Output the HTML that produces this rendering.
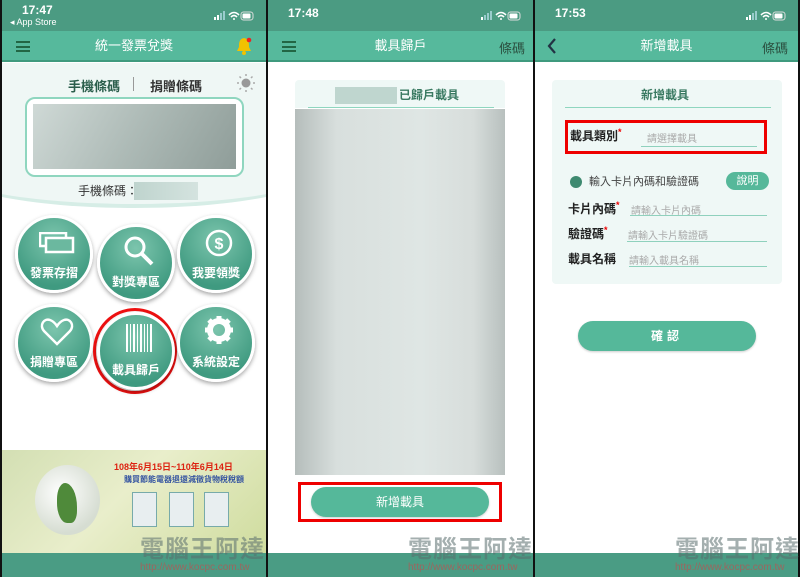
<!DOCTYPE html>
<html><head><meta charset="utf-8"><style>
*{margin:0;padding:0;box-sizing:border-box}
body{width:800px;height:577px;overflow:hidden;background:#111;font-family:"Liberation Sans","Noto Sans CJK TC",sans-serif;position:relative}
.p{position:absolute;top:0;height:577px;background:#fff;overflow:hidden}
.a{position:absolute}
.sb{position:absolute;left:0;right:0;top:0;height:31px;background:#4b9b82;color:#fff}
.hd{position:absolute;left:0;right:0;top:31px;height:31px;background:#56b99c;border-bottom:2px solid #3f9a7e;color:#fff;font-size:13px;text-align:center;line-height:30px}
.time{position:absolute;left:20px;top:6px;font-size:12px;font-weight:bold}
.ic{position:absolute;right:12px;top:11px;width:40px;height:10px}
.bb{position:absolute;left:0;right:0;top:553px;height:24px;background:#4a9c84}
.ham{position:absolute;left:14px;top:41px;width:14px;height:11px;border-top:2px solid #264;border-bottom:2px solid #264}
.ham:after{content:"";position:absolute;left:0;right:0;top:2.5px;border-top:2px solid #264}
.c{position:absolute;width:78px;height:78px;border-radius:50%;background:radial-gradient(circle at 50% 30%,#7cc5ad,#3f9a80 75%);border:3px solid #fff;box-shadow:0 2px 4px rgba(0,0,0,.35);color:#fff;font-size:12px;font-weight:bold;text-align:center}
.c span{position:absolute;left:0;right:0;top:46px}
.ln{position:absolute;border-bottom:1px solid #8fd1bd}
.lb{position:absolute;font-size:12px;font-weight:bold;color:#222}
.ph{position:absolute;font-size:10px;color:#aaa}
.r{color:#e00;font-size:9px;vertical-align:top}
.wm{position:absolute;top:537px;font-size:24px;line-height:26px;font-weight:bold;color:rgba(90,110,110,.55);letter-spacing:1px}
.url{position:absolute;top:562px;font-size:10px;line-height:12px;color:rgba(190,80,80,.7)}
</style></head><body>

<!-- Panel 1 -->
<div class="p" style="left:2px;width:264px">
 <div class="sb"><div class="time" style="top:3px">17:47</div><div class="a" style="left:8px;top:17px;font-size:9px">◂ App Store</div>
  <svg class="ic" viewBox="0 0 40 10"><rect x="0" y="6" width="2" height="3" fill="#fff"/><rect x="3" y="4" width="2" height="5" fill="#fff"/><rect x="6" y="2" width="2" height="7" fill="#9cc"/><rect x="9" y="0" width="2" height="9" fill="#9cc"/><path d="M15 4 Q20 -1 25 4 M17 6 Q20 3 23 6" stroke="#fff" stroke-width="1.6" fill="none"/><circle cx="20" cy="8" r="1" fill="#fff"/><rect x="27" y="1" width="12" height="8" rx="2.5" fill="none" stroke="#ddd"/><rect x="28.5" y="2.5" width="8" height="5" rx="1" fill="#fff"/></svg></div>
 <div class="hd">統一發票兌獎</div>
 <div class="ham"></div>
 <svg class="a" style="left:233px;top:36px" width="18" height="20" viewBox="0 0 18 20"><path d="M9 2 C4 3 4 7 4 11 L2 15 H16 L14 11 C14 7 14 3 9 2Z" fill="#f2c200"/><circle cx="9" cy="17" r="2" fill="#f2c200"/><circle cx="14" cy="4" r="2.3" fill="#e22"/></svg>
 <div class="a" style="left:-60px;top:63px;width:384px;height:145px;background:#eff7f5;border-radius:0 0 50% 50%/0 0 40px 40px;border-bottom:4px solid #d6ede6"></div>
 <div class="a" style="left:66px;top:76px;font-size:13px;font-weight:bold;color:#2b5e4c">手機條碼</div>
 <div class="a" style="left:131px;top:77px;height:14px;border-left:1px solid #999"></div>
 <div class="a" style="left:148px;top:76px;font-size:13px;font-weight:bold;color:#333">捐贈條碼</div>
 <svg class="a" style="left:235px;top:74px" width="18" height="18" viewBox="0 0 18 18"><circle cx="9" cy="9" r="4.5" fill="#999"/><g stroke="#aaa" stroke-width="1.5"><path d="M9 0v2M9 16v2M0 9h2M16 9h2M2.5 2.5l1.5 1.5M14 14l1.5 1.5M2.5 15.5l1.5-1.5M14 4l1.5-1.5"/></g></svg>
 <div class="a" style="left:23px;top:97px;width:219px;height:80px;border:2px solid #8fd6bf;border-radius:10px;background:#fff"></div>
 <div class="a" style="left:31px;top:104px;width:203px;height:65px;background:linear-gradient(120deg,#cfd9d6,#adbab6 50%,#8f9d99)"></div>
 <div class="a" style="left:76px;top:182px;font-size:12px;color:#333">手機條碼：</div>
 <div class="a" style="left:132px;top:182px;width:64px;height:18px;background:linear-gradient(90deg,#bfd4ce,#d4e3df)"></div>
 <div class="c" style="left:13px;top:215px"><svg class="a" style="left:21px;top:14px" width="36" height="22" viewBox="0 0 36 22"><rect x="1" y="1" width="26" height="13" fill="none" stroke="#fff" stroke-width="2.5"/><rect x="7" y="6" width="27" height="14" fill="#6bb89f" stroke="#fff" stroke-width="2.5"/></svg><span>發票存摺</span></div>
 <div class="c" style="left:95px;top:224px"><svg class="a" style="left:23px;top:8px" width="32" height="32" viewBox="0 0 32 32"><circle cx="12" cy="12" r="9" fill="none" stroke="#fff" stroke-width="3"/><path d="M19 19l10 10" stroke="#fff" stroke-width="4"/></svg><span>對獎專區</span></div>
 <div class="c" style="left:175px;top:215px"><svg class="a" style="left:24px;top:10px" width="30" height="30" viewBox="0 0 30 30"><circle cx="15" cy="15" r="12" fill="none" stroke="#fff" stroke-width="2.5"/><text x="15" y="21" font-size="16" text-anchor="middle" fill="#fff" font-family="Liberation Sans">$</text></svg><span>我要領獎</span></div>
 <div class="c" style="left:13px;top:304px"><svg class="a" style="left:22px;top:10px" width="34" height="30" viewBox="0 0 34 30"><path d="M17 27 L4 14 C-1 8 4 1 10 3 C13 4 15 6 17 9 C19 6 21 4 24 3 C30 1 35 8 30 14Z" fill="none" stroke="#fff" stroke-width="2.5"/></svg><span>捐贈專區</span></div>
 <div class="a" style="left:91px;top:308px;width:84px;height:86px;border:3px solid #e11;border-radius:50%"></div>
 <div class="c" style="left:95px;top:312px"><svg class="a" style="left:25px;top:9px" width="28" height="28" viewBox="0 0 28 28" fill="#fff"><rect x="1" y="0" width="2" height="28"/><rect x="5" y="0" width="1" height="28"/><rect x="8" y="0" width="2" height="28"/><rect x="12" y="0" width="1" height="28"/><rect x="15" y="0" width="2" height="28"/><rect x="19" y="0" width="1" height="28"/><rect x="22" y="0" width="1" height="28"/><rect x="25" y="0" width="2" height="28"/></svg><span>載具歸戶</span></div>
 <div class="c" style="left:175px;top:304px"><svg class="a" style="left:24px;top:8px" width="30" height="30" viewBox="0 0 30 30"><circle cx="15" cy="15" r="9" fill="none" stroke="#fff" stroke-width="6"/><g stroke="#fff" stroke-width="5"><path d="M15 1v6M15 23v6M1 15h6M23 15h6M5 5l4 4M21 21l4 4M5 25l4-4M21 9l4-4"/></g></svg><span>系統設定</span></div>
 <div class="a" style="left:0;top:450px;width:264px;height:103px;background:linear-gradient(135deg,#d3dfb3,#e9eecb 45%,#cfdc9e)"></div>
 <div class="a" style="left:33px;top:465px;width:65px;height:70px;border-radius:50%;background:radial-gradient(circle at 40% 40%,#fff,#d6ddd2 70%)"></div>
 <div class="a" style="left:55px;top:483px;width:20px;height:40px;background:#4f8a3a;border-radius:40% 60% 30% 50%"></div>
 <div class="a" style="left:112px;top:460px;font-size:9px;font-weight:bold;color:#d21">108年6月15日~110年6月14日</div>
 <div class="a" style="left:122px;top:474px;font-size:8px;font-weight:bold;color:#3353a0">購買節能電器退還減徵貨物稅稅額</div>
 <div class="a" style="left:130px;top:492px;width:25px;height:35px;background:#e8eef0;border:1px solid #7aa"></div>
 <div class="a" style="left:167px;top:492px;width:25px;height:35px;background:#e8eef0;border:1px solid #7aa"></div>
 <div class="a" style="left:202px;top:492px;width:25px;height:35px;background:#e8eef0;border:1px solid #7aa"></div>
 <div class="bb"></div>
</div>

<!-- Panel 2 -->
<div class="p" style="left:268px;width:265px">
 <div class="sb"><div class="time">17:48</div><svg class="ic" viewBox="0 0 40 10"><rect x="0" y="6" width="2" height="3" fill="#fff"/><rect x="3" y="4" width="2" height="5" fill="#9cc"/><rect x="6" y="2" width="2" height="7" fill="#9cc"/><rect x="9" y="0" width="2" height="9" fill="#9cc"/><path d="M15 4 Q20 -1 25 4 M17 6 Q20 3 23 6" stroke="#fff" stroke-width="1.6" fill="none"/><circle cx="20" cy="8" r="1" fill="#fff"/><rect x="27" y="1" width="12" height="8" rx="2.5" fill="none" stroke="#ddd"/><rect x="28.5" y="2.5" width="8" height="5" rx="1" fill="#fff"/></svg></div>
 <div class="hd">載具歸戶</div>
 <div class="ham"></div>
 <div class="a" style="right:8px;top:38px;font-size:13px;color:#2b5040">條碼</div>
 <div class="a" style="left:27px;top:80px;width:210px;height:28px;background:#eff8f6;border-radius:4px 4px 0 0"></div>
 <div class="a" style="left:67px;top:87px;width:62px;height:17px;background:#bfd6cf"></div>
 <div class="a" style="left:131px;top:86px;font-size:12px;font-weight:bold;color:#3a7a62">已歸戶載具</div>
 <div class="a" style="left:40px;top:107px;width:186px;border-top:1px solid #8fd6bf"></div>
 <div class="a" style="left:27px;top:109px;width:210px;height:366px;background:linear-gradient(90deg,#b5bdbb,#d8dfdd 20%,#dfe6e4 60%,#d7dddb 85%,#b8c0be),linear-gradient(#cfe0db,#e3e8e6)"></div>
 <div class="a" style="left:30px;top:482px;width:204px;height:40px;border:3px solid #e00"></div>
 <div class="a" style="left:43px;top:487px;width:178px;height:30px;background:#55b89a;border-radius:15px;color:#fff;font-size:12px;text-align:center;line-height:30px;box-shadow:0 1px 2px rgba(0,0,0,.2)">新增載具</div>
 <div class="bb"></div>
</div>

<!-- Panel 3 -->
<div class="p" style="left:535px;width:263px">
 <div class="sb"><div class="time">17:53</div><svg class="ic" viewBox="0 0 40 10"><rect x="0" y="6" width="2" height="3" fill="#fff"/><rect x="3" y="4" width="2" height="5" fill="#fff"/><rect x="6" y="2" width="2" height="7" fill="#9cc"/><rect x="9" y="0" width="2" height="9" fill="#9cc"/><path d="M15 4 Q20 -1 25 4 M17 6 Q20 3 23 6" stroke="#fff" stroke-width="1.6" fill="none"/><circle cx="20" cy="8" r="1" fill="#fff"/><rect x="27" y="1" width="12" height="8" rx="2.5" fill="none" stroke="#ddd"/><rect x="28.5" y="2.5" width="8" height="5" rx="1" fill="#fff"/></svg></div>
 <div class="hd">新增載具</div>
 <svg class="a" style="left:12px;top:38px" width="10" height="16" viewBox="0 0 10 16"><path d="M8 1 L2 8 L8 15" stroke="#234" stroke-width="2.2" fill="none"/></svg>
 <div class="a" style="right:10px;top:38px;font-size:13px;color:#2b5040">條碼</div>
 <div class="a" style="left:17px;top:80px;width:230px;height:204px;background:#eff8f6;border-radius:4px"></div>
 <div class="a" style="left:106px;top:86px;font-size:12px;font-weight:bold;color:#3a7a62">新增載具</div>
 <div class="a" style="left:30px;top:107px;width:206px;border-top:1px solid #8fd6bf"></div>
 <div class="a" style="left:30px;top:120px;width:202px;height:34px;border:3px solid #e00"></div>
 <div class="lb" style="left:35px;top:127px">載具類別<span class="r">*</span></div>
 <div class="ph" style="left:112px;top:130px">請選擇載具</div><div class="ln" style="left:106px;top:146px;width:116px"></div>
 <div class="a" style="left:35px;top:176px;width:12px;height:12px;border-radius:50%;background:#3e8a70"></div>
 <div class="a" style="left:54px;top:173px;font-size:11px;color:#444">輸入卡片內碼和驗證碼</div>
 <div class="a" style="left:191px;top:172px;width:43px;height:18px;border-radius:9px;background:#56b89a;color:#fff;font-size:11px;text-align:center;line-height:18px">說明</div>
 <div class="lb" style="left:33px;top:200px">卡片內碼<span class="r">*</span></div>
 <div class="ph" style="left:96px;top:202px">請輸入卡片內碼</div><div class="ln" style="left:95px;top:215px;width:137px"></div>
 <div class="lb" style="left:33px;top:225px">驗證碼<span class="r">*</span></div>
 <div class="ph" style="left:93px;top:227px">請輸入卡片驗證碼</div><div class="ln" style="left:92px;top:241px;width:140px"></div>
 <div class="lb" style="left:33px;top:250px">載具名稱</div>
 <div class="ph" style="left:94px;top:252px">請輸入載具名稱</div><div class="ln" style="left:94px;top:266px;width:138px"></div>
 <div class="a" style="left:43px;top:321px;width:178px;height:30px;background:#55b89a;border-radius:15px;color:#fff;font-size:12px;font-weight:bold;text-align:center;line-height:30px;letter-spacing:4px;box-shadow:0 1px 2px rgba(0,0,0,.2)">確認</div>
 <div class="bb"></div>
</div>
<div class="wm" style="left:140px">電腦王阿達</div>
<div class="url" style="left:140px">http://www.kocpc.com.tw</div>
<div class="wm" style="left:408px">電腦王阿達</div>
<div class="url" style="left:408px">http://www.kocpc.com.tw</div>
<div class="wm" style="left:675px">電腦王阿達</div>
<div class="url" style="left:675px">http://www.kocpc.com.tw</div>
</body></html>
